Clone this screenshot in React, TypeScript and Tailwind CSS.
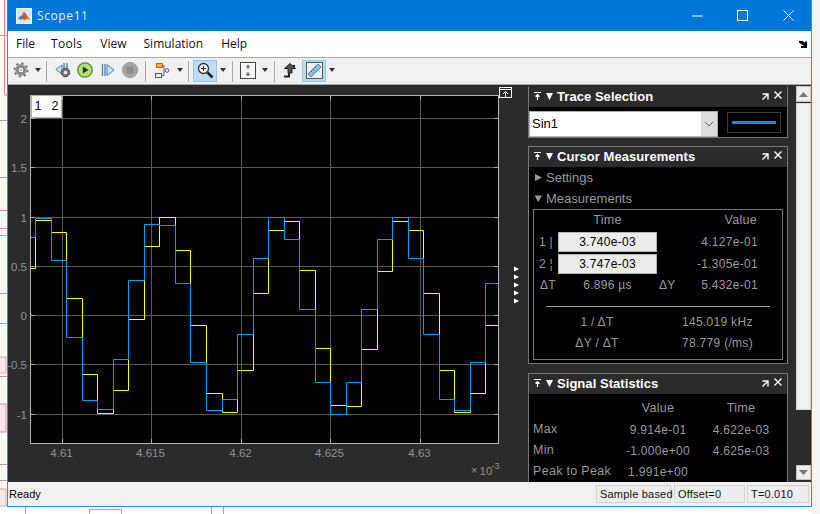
const SANS = "font-['Liberation_Sans',Arial,sans-serif]";

// step levels read off the scope, first block and second block of the plot
const OFFSET_A = [28, 205];
const OFFSET_B = [260, 205];
const YELLOW_A = [[7,190],[22,46],[70,82],[115,280],[163,508],[208,625],[256,556],[301,343],[349,124],[394,37],[442,136],[487,361],[535,565],[583,622],[628,496],[676,265]];
const YELLOW_B = [[25,76],[73,49],[118,196],[166,430],[211,601],[259,604],[304,433],[352,199],[397,49],[445,76],[490,265],[538,496],[583,622],[631,565],[676,361]];
const BLUE_A = [[7,97],[22,40],[70,166],[115,397],[163,586],[208,613],[256,463],[301,226],[349,58],[394,61],[442,235],[487,472],[535,616],[583,583],[628,388],[676,160]];
const BLUE_B = [[25,37],[73,103],[118,313],[166,532],[211,628],[259,532],[304,313],[352,103],[397,37],[445,160],[490,388],[538,583],[583,616],[631,472],[676,235]];

function stepPath(a: number[][], b: number[][]) {
  const pts = [
    ...a.map(([x, y]) => [OFFSET_A[0] + x / 3, OFFSET_A[1] + y / 3]),
    ...b.map(([x, y]) => [OFFSET_B[0] + x / 3, OFFSET_B[1] + y / 3]),
  ].map(([x, y]) => [Math.floor(x) + 0.5, Math.floor(y) + 0.5]);
  let d = `M${pts[0][0]} ${pts[0][1]}`;
  for (let i = 1; i < pts.length; i++) {
    d += `H${pts[i][0]}V${pts[i][1]}`;
  }
  return d + "H498";
}

const Y_TICKS = [
  { y: 118.5, label: "2" },
  { y: 167.5, label: "1.5" },
  { y: 217.5, label: "1" },
  { y: 266.5, label: "0.5" },
  { y: 315.5, label: "0" },
  { y: 364.5, label: "-0.5" },
  { y: 414.5, label: "-1" },
];
const X_TICKS = [
  { x: 62.5, label: "4.61" },
  { x: 151.5, label: "4.615" },
  { x: 241.5, label: "4.62" },
  { x: 330.5, label: "4.625" },
  { x: 420.5, label: "4.63" },
];

function Plot() {
  return (
    <svg width={520} height={398} viewBox="8 85 520 398" className="block shrink-0" fontFamily="'Liberation Sans',Arial,sans-serif">
      <rect x={30} y={95} width={468} height={348} fill="#000" />
      {Y_TICKS.map((t) => (
        <g key={t.label}>
          <path d={`M30.5 ${t.y}H498`} stroke="#5a5a5a" />
          <path d={`M31 ${t.y}H35M494 ${t.y}H498`} stroke="#a8a8a8" />
          <text x={27} y={t.y + 4} textAnchor="end" fontSize={11.5} fill="#929292">{t.label}</text>
        </g>
      ))}
      {X_TICKS.map((t) => (
        <g key={t.label}>
          <path d={`M${t.x} 95V443`} stroke="#5a5a5a" />
          <path d={`M${t.x} 96V100M${t.x} 439V443`} stroke="#a8a8a8" />
          <text x={t.x - 1} y={457} textAnchor="middle" fontSize={11.5} fill="#929292">{t.label}</text>
        </g>
      ))}
      <path d={stepPath(YELLOW_A, YELLOW_B)} fill="none" stroke="#ffff00" />
      <path d={stepPath(BLUE_A, BLUE_B)} fill="none" stroke="#0a9bf5" />
      <rect x={30.5} y={95.5} width={468} height={348} fill="none" stroke="#b4b4b4" />
      <text x={471} y={474} fontSize={11} fill="#929292">×</text>
      <text x={479.5} y={474.5} fontSize={11.5} fill="#929292">10</text>
      <text x={491.5} y={469} fontSize={9} fill="#929292">-3</text>
      {/* expand button */}
      <rect x={499.5} y={87.5} width={12} height={10} fill="none" stroke="#fff" />
      <path d="M499.5 89.5H511.5M505.5 97V92.5M503 94L505.5 91.5L508 94" fill="none" stroke="#fff" />
      {[269, 277, 285, 293, 301].map((y) => (
        <path key={y} d={`M514 ${y - 2.5}L519 ${y}L514 ${y + 2.5}Z`} fill="#fff" />
      ))}
    </svg>
  );
}

function PanelHeader({ title }: { title: string }) {
  return (
    <div className="h-[20px] pb-[2px] bg-[#2b2b2b] flex items-center shrink-0">
      <svg width={10} height={10} viewBox="0 0 10 10" className="ml-[4px] mr-[2px] shrink-0">
        <path d="M1 1.5H8M4.5 9V4M2.5 5.5L4.5 3.5L6.5 5.5" fill="none" stroke="#fff" strokeWidth={1.2} />
      </svg>
      <svg width={9} height={9} viewBox="0 0 9 9" className="mr-[3px] shrink-0">
        <path d="M1 1H8L4.5 8Z" fill="#fff" />
      </svg>
      <span className="text-white font-bold text-[13px] tracking-[0.05px] leading-none whitespace-nowrap">{title}</span>
      <svg width={8} height={8} viewBox="0 0 8 8" className="ml-auto mr-[4px] mt-[1px] shrink-0">
        <path d="M1.5 1H7V6.5M6.5 1.5L1.5 6.5" fill="none" stroke="#fff" strokeWidth={1.4} />
      </svg>
      <svg width={10} height={10} viewBox="0 0 10 10" className="mr-[4px] mb-[2px] shrink-0">
        <path d="M1.5 1.5L8.5 8.5M8.5 1.5L1.5 8.5" fill="none" stroke="#fff" strokeWidth={1.4} />
      </svg>
    </div>
  );
}

function Disclosure({ label, open }: { label: string; open?: boolean }) {
  return (
    <div className="h-[21px] flex items-center pl-[5px] text-[13px] text-[#9a9a9a] shrink-0">
      <svg width={9} height={9} viewBox="0 0 9 9" className="mr-[3px]">
        <path d={open ? "M0.5 1.5H8L4.2 8Z" : "M1 1L8 4.5L1 8Z"} fill="#9a9a9a" />
      </svg>
      {label}
    </div>
  );
}

function TraceSelection() {
  return (
    <div className="border border-[#777] border-t-[#2b2b2b] h-[52px] bg-black flex flex-col shrink-0">
      <PanelHeader title="Trace Selection" />
      <div className="flex items-start">
        <div className="mt-[4px] w-[189px] h-[26px] bg-white border border-[#b0b0b0] flex items-center">
          <span className="pl-[2px] flex-1 text-[13px] text-black">Sin1</span>
          <div className="w-[16px] h-full bg-[#dcdcdc] flex items-center justify-center">
            <svg width={10} height={6} viewBox="0 0 10 6">
              <path d="M1 1L5 5L9 1" fill="none" stroke="#666" />
            </svg>
          </div>
        </div>
        <div className="mt-[5px] ml-[9px] w-[54px] h-[21px] border border-[#3c3c3c] flex items-center justify-center">
          <div className="w-[44px] h-[3px] bg-[#0a8fe8]" />
        </div>
      </div>
    </div>
  );
}

function CursorMeasurements() {
  const input = "w-[99px] h-[20px] bg-[#ececec] border border-[#b4b4b4] flex items-center justify-center text-black";
  return (
    <div className="mt-[8px] border border-[#777] h-[218px] bg-black flex flex-col shrink-0">
      <PanelHeader title="Cursor Measurements" />
      <Disclosure label="Settings" />
      <Disclosure label="Measurements" open />
      <div className="mx-[4px] h-[151px] border border-[#777] text-[#9a9a9a] text-[12px] tracking-[0.3px] flex flex-col">
        <div className="h-[21px] flex items-center shrink-0">
          <span className="ml-[24px] w-[99px] text-center text-[12.5px]">Time</span>
          <span className="w-[101px] text-right text-[12.5px] pr-[1px]">Value</span>
        </div>
        <div className="h-[22px] flex items-center shrink-0">
          <span className="w-[24px] pl-[5px] whitespace-nowrap">1 |</span>
          <div className={input}>3.740e-03</div>
          <span className="w-[101px] text-right">4.127e-01</span>
        </div>
        <div className="h-[20px] flex items-center shrink-0 mt-[1px]">
          <span className="w-[24px] pl-[5px] whitespace-nowrap">2 ¦</span>
          <div className={input}>3.747e-03</div>
          <span className="w-[101px] text-right">-1.305e-01</span>
        </div>
        <div className="h-[21px] flex items-center shrink-0">
          <span className="w-[24px] pl-[6px]">ΔT</span>
          <span className="w-[99px] text-center">6.896 µs</span>
          <span className="w-[18px] ml-[2px]">ΔY</span>
          <span className="w-[81px] text-right">5.432e-01</span>
        </div>
        <div className="mx-[12px] mt-[11px] h-px bg-[#a0a0a0] shrink-0" />
        <div className="h-[21px] mt-[4px] flex items-center shrink-0">
          <span className="w-[126px] text-center">1 / ΔT</span>
          <span className="ml-[22px] whitespace-nowrap">145.019 kHz</span>
        </div>
        <div className="h-[21px] flex items-center shrink-0">
          <span className="w-[126px] text-center">ΔY / ΔT</span>
          <span className="ml-[22px] whitespace-nowrap">78.779 (/ms)</span>
        </div>
      </div>
    </div>
  );
}

function SignalStatistics() {
  const rows = [
    ["Max", "9.914e-01", "4.622e-03"],
    ["Min", "-1.000e+00", "4.625e-03"],
    ["Peak to Peak", "1.991e+00", ""],
  ];
  return (
    <div className="mt-[9px] border border-[#777] h-[130px] bg-black flex flex-col shrink-0">
      <PanelHeader title="Signal Statistics" />
      <div className="h-[21px] mt-[4px] flex items-center text-[12.5px] text-[#9a9a9a] tracking-[0.3px] shrink-0">
        <span className="ml-[96px] w-[66px] text-center">Value</span>
        <span className="ml-[21px] w-[58px] text-center">Time</span>
      </div>
      {rows.map(([name, val, time]) => (
        <div key={name} className="h-[21px] flex items-center text-[12px] text-[#9a9a9a] tracking-[0.3px] shrink-0">
          <span className="w-[96px] pl-[4px] whitespace-nowrap text-[12.5px]">{name}</span>
          <span className="w-[66px] text-center whitespace-nowrap">{val}</span>
          <span className="ml-[21px] w-[58px] text-center">{time}</span>
        </div>
      ))}
    </div>
  );
}

function Scrollbar() {
  return (
    <div className="w-[15px] h-full pt-[1px] pb-[2px] bg-[#2b2b2b] flex flex-col shrink-0">
      <div className="h-[16px] bg-[#efefef] border border-[#c4c4c4] flex items-center justify-center shrink-0">
        <svg width={9} height={5} viewBox="0 0 9 5"><path d="M0 5L4.5 0L9 5Z" fill="#777" /></svg>
      </div>
      <div className="h-[307px] mt-[1px] bg-[#f0f0f0] border border-[#d8d8d8] shrink-0" />
      <div className="flex-1" />
      <div className="h-[15px] bg-[#efefef] border border-[#c4c4c4] flex items-center justify-center shrink-0">
        <svg width={9} height={5} viewBox="0 0 9 5"><path d="M0 0L4.5 5L9 0Z" fill="#777" /></svg>
      </div>
    </div>
  );
}

function Caret({ className }: { className?: string }) {
  return (
    <svg width={6} height={4} viewBox="0 0 6 4" className={`shrink-0 ${className ?? ""}`}>
      <path d="M0 0H6L3 4Z" fill="#333" />
    </svg>
  );
}

function Sep({ className }: { className?: string }) {
  return <div className={`w-px h-[21px] mt-[2px] bg-[#a8a8a8] shrink-0 ${className ?? ""}`} />;
}

function Toolbar() {
  return (
    <div className="h-[27px] pb-[2px] bg-[#f0f0f0] border-b border-[#a8a8a8] flex items-center shrink-0">
      {/* gear */}
      <svg width={16} height={16} viewBox="0 0 16 16" className="ml-[5px] shrink-0">
        <circle cx={8} cy={8} r={6.6} fill="none" stroke="#6e6e6e" strokeWidth={1.8} strokeDasharray="2.2 3" />
        <circle cx={8} cy={8} r={5.4} fill="#9c9c9c" stroke="#6a6a6a" strokeWidth={0.6} />
        <circle cx={8} cy={8} r={3.2} fill="#f2f2f2" stroke="#555" />
        <circle cx={8} cy={8} r={1.1} fill="#a8a8a8" />
      </svg>
      <Caret className="ml-[6px]" />
      <Sep className="ml-[5px]" />
      {/* step back with gear */}
      <svg width={16} height={16} viewBox="0 0 16 16" className="ml-[8px] shrink-0">
        <path d="M7 3L0.8 7.5L7 12Z" fill="#cfe3f5" stroke="#4a7fb0" />
        <path d="M9 1V8M12 1V8" stroke="#4a7fb0" strokeWidth={1.4} />
        <circle cx={10.5} cy={10.5} r={4.2} fill="#777" stroke="#444" />
        <circle cx={10.5} cy={10.5} r={1.8} fill="#eee" />
      </svg>
      {/* run */}
      <svg width={16} height={16} viewBox="0 0 16 16" className="ml-[6px] shrink-0">
        <circle cx={8} cy={8} r={7.2} fill="#b5e07a" stroke="#4f8a1e" strokeWidth={1.3} />
        <path d="M5.8 4.5L11.5 8L5.8 11.5Z" fill="#333" />
      </svg>
      {/* step forward */}
      <svg width={14} height={14} viewBox="0 0 14 14" className="ml-[8px] shrink-0">
        <path d="M1.5 1V13M4 1V13" stroke="#4a7fb0" strokeWidth={1.3} />
        <path d="M6 1.5L13 7L6 12.5Z" fill="#cfe3f5" stroke="#4a7fb0" />
      </svg>
      {/* stop */}
      <svg width={16} height={16} viewBox="0 0 16 16" className="ml-[7px] shrink-0">
        <circle cx={8} cy={8} r={7.6} fill="#a6a6a6" stroke="#9a9a9a" />
        <rect x={4.5} y={4.5} width={7} height={7} fill="#8c8c8c" />
      </svg>
      <Sep className="ml-[7px]" />
      {/* signal hierarchy */}
      <svg width={16} height={15} viewBox="0 0 16 15" className="ml-[8px] shrink-0">
        <rect x={2.5} y={0.5} width={6} height={4} fill="#f5b041" stroke="#b5651d" />
        <rect x={1.5} y={10.5} width={6} height={4} fill="#f4f4f4" stroke="#555" />
        <circle cx={13} cy={7.5} r={1.8} fill="#f4f4f4" stroke="#555" />
        <path d="M8.5 2.5H10V7.5H11M7.5 12.5H10V7.5" fill="none" stroke="#666" />
      </svg>
      <Caret className="ml-[7px]" />
      <Sep className="ml-[5px]" />
      {/* zoom toggled */}
      <div className="ml-[4px] mt-[1px] w-[24px] h-[22px] bg-[#bfdcf3] border border-[#8cc4f0] flex items-center justify-center shrink-0">
        <svg width={17} height={17} viewBox="0 0 17 17">
          <circle cx={6.5} cy={6.5} r={5} fill="#f4f8fb" stroke="#333" strokeWidth={1.3} />
          <path d="M4 6.5H9M6.5 4V9" stroke="#222" />
          <path d="M10.5 10.5L15.5 15.5" stroke="#222" strokeWidth={2.6} />
        </svg>
      </div>
      <Caret className="ml-[3px]" />
      <Sep className="ml-[6px]" />
      {/* scale axes */}
      <svg width={16} height={17} viewBox="0 0 16 17" className="ml-[7px] shrink-0">
        <rect x={0.5} y={0.5} width={15} height={16} fill="#f8f8f8" stroke="#444" />
        <path d="M8 2.5L5.5 5.5H10.5ZM8 14.5L5.5 11.5H10.5Z" fill="#666" />
        <path d="M8 5.5V7M8 10V11.5" stroke="#666" />
      </svg>
      <Caret className="ml-[6px]" />
      <Sep className="ml-[6px]" />
      {/* triggers */}
      <svg width={14} height={16} viewBox="0 0 14 16" className="ml-[8px] shrink-0">
        <path d="M1 14.5H6V4H12" fill="none" stroke="#222" strokeWidth={2} />
        <path d="M7 1.5L12.5 6.5H9V11H5V6.5H1.5Z" fill="#555" stroke="#222" />
      </svg>
      {/* cursors toggled */}
      <div className="ml-[5px] mt-[1px] w-[24px] h-[22px] bg-[#bfdcf3] border border-[#8cc4f0] flex items-center justify-center shrink-0">
        <svg width={17} height={17} viewBox="0 0 17 17">
          <rect x={0.5} y={0.5} width={16} height={16} fill="#f0f0f0" stroke="#555" />
          <path d="M2 12L12 2L15 5L5 15Z" fill="#8fc3e8" stroke="#4a7fa8" />
          <path d="M5 9L6.5 10.5M7 7L8.5 8.5M9 5L10.5 6.5" stroke="#3f6f96" />
        </svg>
      </div>
      <Caret className="ml-[3px]" />
    </div>
  );
}

function TitleBar() {
  return (
    <div className="h-[31px] bg-[#0078d7] flex items-center shrink-0">
      <svg width={16} height={16} viewBox="0 0 16 16" className="ml-[8px] shrink-0">
        <rect x={0.5} y={0.5} width={15} height={15} fill="#d9e4ee" stroke="#eaf1f7" />
        <path d="M2 10L6 7.5L8 3.5L10 6L14 12L11 10.5L8 12.5L6 9.5Z" fill="#d9541e" />
        <path d="M2 10L6 7.5L7.5 9.5L5 12Z" fill="#3a7db8" />
      </svg>
      <span className="ml-[5px] text-[12px] text-[#e4f1fb] font-['Open_Sans',sans-serif] tracking-[0.6px]">Scope11</span>
      <svg width={11} height={2} viewBox="0 0 11 2" className="ml-auto mr-[34px]"><path d="M0 1H11" stroke="#fff" /></svg>
      <svg width={11} height={11} viewBox="0 0 11 11" className="mr-[35px]"><rect x={0.5} y={0.5} width={10} height={10} fill="none" stroke="#fff" /></svg>
      <svg width={11} height={11} viewBox="0 0 11 11" className="mr-[17px]"><path d="M0.5 0.5L10.5 10.5M10.5 0.5L0.5 10.5" stroke="#fff" /></svg>
    </div>
  );
}

function MenuBar() {
  return (
    <div className="h-[27px] bg-white border-b border-[#a8a8a8] flex items-center shrink-0 font-['Open_Sans',sans-serif] text-[12px] text-[#111]">
      <span className="ml-[8px]">File</span>
      <span className="ml-[16px] tracking-[0.3px]">Tools</span>
      <span className="ml-[18px]">View</span>
      <span className="ml-[17px]">Simulation</span>
      <span className="ml-[18px]">Help</span>
      <svg width={8} height={7} viewBox="0 0 8 7" className="ml-auto mr-[4px] shrink-0">
        <path d="M0 0H3.5L6 2V0.5H8V7H2V5H5L0 1.5Z" fill="#000" />
      </svg>
    </div>
  );
}

function StatusBar() {
  const cell = "h-[18px] bg-[#ededed] border border-[#d4d4d4] flex items-center px-[3px] text-[11px] tracking-[0.2px] text-[#111] whitespace-nowrap shrink-0";
  return (
    <div className="h-[24px] bg-[#f0f0f0] flex items-center shrink-0">
      <span className="ml-[1px] text-[11px] text-black">Ready</span>
      <div className={`${cell} ml-auto w-[75px]`}>Sample based</div>
      <div className={`${cell} ml-[3px] w-[71px]`}>Offset=0</div>
      <div className={`${cell} ml-[2px] w-[62px] mr-[2px]`}>T=0.010</div>
    </div>
  );
}

// bits of the Simulink diagram showing behind the scope window
function Backdrop() {
  return (
    <svg width={820} height={514} viewBox="0 0 820 514" className="absolute left-0 top-0">
      <path d="M4.5 0V95H7M0 35.5H7M0 120.5H7M0 177.5H7M0 210.5H7M0 228.5H7M0 235.5H7M0 293.5H7M0 323.5H7M0 376.5H7M0 464.5H7M0 480.5H7" stroke="#e08a8a" fill="none" />
      <rect x={-1} y={357} width={7} height={16} fill="#fbe9e9" stroke="#e9a0a0" />
      <rect x={-1} y={404} width={7} height={28} fill="#fbe9e9" stroke="#e08a8a" />
      <rect x={-1} y={489} width={7} height={17} fill="#fbe9e9" stroke="#e9a0a0" />
      <path d="M25.5 507V514M89.5 514V509.5H121.5V514M211.5 507V514M223.5 507V514" stroke="#e08a8a" fill="none" />
      <rect x={812} y={0} width={8} height={514} fill="#f4f4f4" />
    </svg>
  );
}

export default function App() {
  return (
    <div className={`relative w-[820px] h-[514px] bg-white overflow-hidden ${SANS}`}>
      <Backdrop />
      <div className="relative ml-[7px] w-[805px] h-[507px] bg-[#2b2b2b] border-x border-b border-[#2f8fdf] flex flex-col">
        <TitleBar />
        <MenuBar />
        <Toolbar />
        <div className="flex-1 flex bg-[#2b2b2b] overflow-hidden min-h-0">
          <div className="relative shrink-0 w-[520px]">
            <Plot />
            <div className="absolute left-[23px] top-[10px] w-[31px] h-[23px] bg-white border border-[#b4b4b4] flex items-center justify-center text-[12.5px] text-black gap-[10px]">
              <span>1</span>
              <span>2</span>
            </div>
          </div>
          <div className="w-[260px] flex flex-col shrink-0 pt-[1px]">
            <TraceSelection />
            <CursorMeasurements />
            <SignalStatistics />
          </div>
          <div className="w-[8px] shrink-0" />
          <Scrollbar />
        </div>
        <StatusBar />
      </div>
    </div>
  );
}
